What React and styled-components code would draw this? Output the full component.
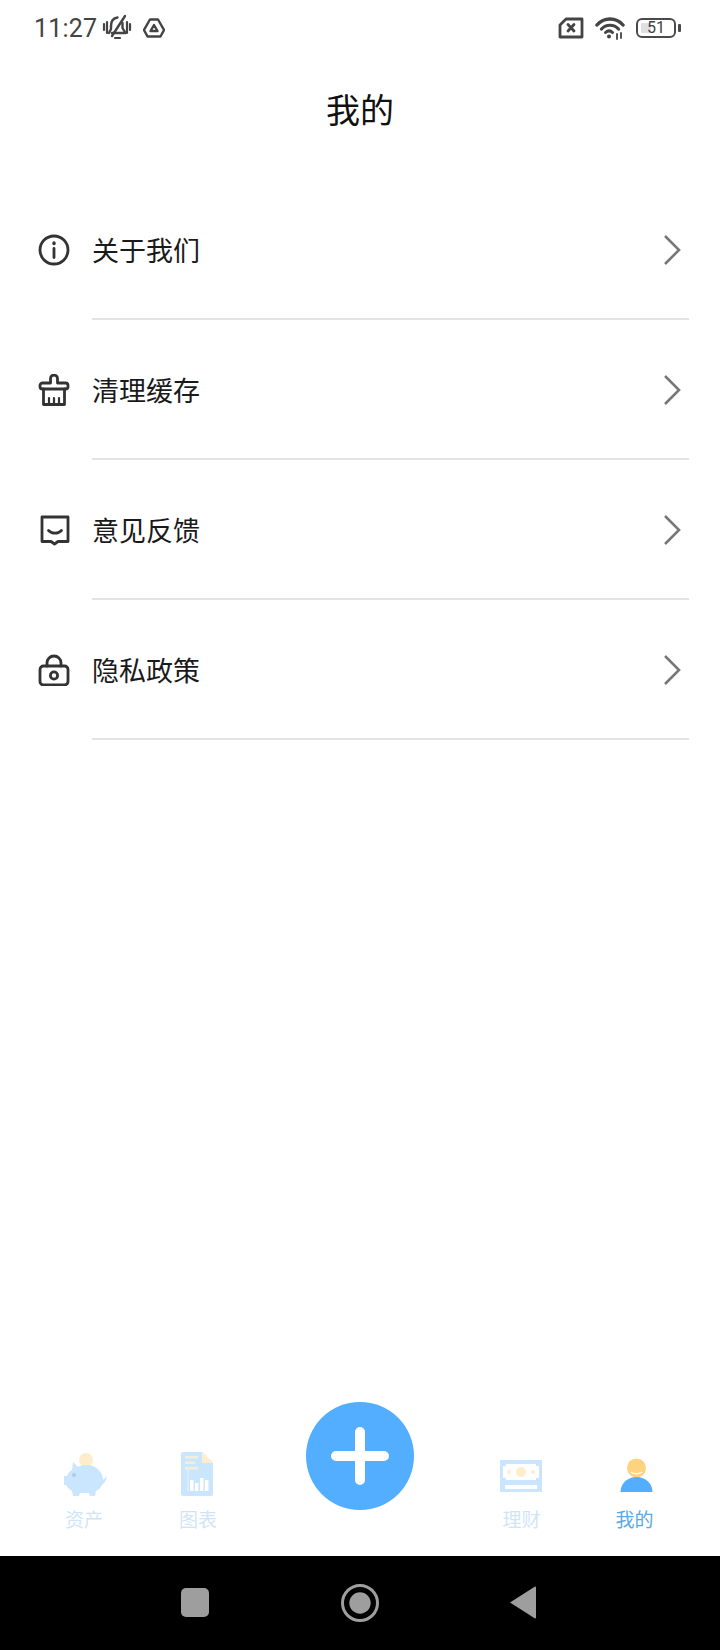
import React from "react";
import styled, { createGlobalStyle } from "styled-components";

const Global = createGlobalStyle`
  html, body { margin: 0; padding: 0; background: #fff; }
  * { box-sizing: border-box; }
`;

const CJK = `"Noto Sans CJK SC", "Noto Sans", sans-serif`;

const Page = styled.div`
  width: 720px;
  height: 1650px;
  display: flex;
  flex-direction: column;
  background: #fff;
  font-family: ${CJK};
`;

const StatusBar = styled.div`
  height: 56px;
  display: flex;
  align-items: center;
  justify-content: space-between;
  padding: 0 44px 0 34px;
`;

const StatusGroup = styled.div`
  display: flex;
  align-items: center;
  gap: ${(p) => p.$gap}px;
`;

const Clock = styled.span`
  font-family: Roboto, sans-serif;
  font-size: 25px;
  color: #444;
  letter-spacing: 0.2px;
`;

const Battery = styled.div`
  position: relative;
  width: 40px;
  height: 20px;
  border: 2px solid #4a4a4a;
  border-radius: 6px;
  display: flex;
  align-items: center;
  justify-content: center;
  font-family: Roboto, sans-serif;
  font-size: 16px;
  line-height: 1;
  color: #444;
  &::before {
    content: "";
    position: absolute;
    left: 3px;
    top: 3px;
    bottom: 3px;
    width: 10px;
    background: #dfdfdf;
    border-radius: 1px;
  }
  &::after {
    content: "";
    position: absolute;
    right: -7px;
    top: 4px;
    width: 3px;
    height: 8px;
    background: #4a4a4a;
    border-radius: 1px;
  }
`;

const BatteryLevel = styled.span`
  position: relative;
`;

const Title = styled.h1`
  margin: 0;
  height: 124px;
  padding-top: 26px;
  text-align: center;
  font-size: 34px;
  line-height: 54px;
  font-weight: 400;
  color: #111;
`;

const Menu = styled.div`
  display: flex;
  flex-direction: column;
`;

const Row = styled.div`
  height: 140px;
  display: flex;
  flex-direction: column;
  padding-left: 92px;
  padding-right: 31px;
`;

const RowBody = styled.div`
  flex: 1;
  position: relative;
  display: flex;
  align-items: center;
  justify-content: space-between;
  padding: 2px 8px 0 0;
`;

const RowIcon = styled.svg`
  position: absolute;
  left: -54px;
  top: 50%;
  margin-top: -15px;
  width: 32px;
  height: 32px;
  fill: none;
  stroke: #333;
  stroke-width: 2.8;
  stroke-linecap: round;
  stroke-linejoin: round;
`;

const RowLabel = styled.span`
  font-size: 27px;
  line-height: 40px;
  color: #1a1a1a;
`;

const Chevron = styled.svg`
  width: 18px;
  height: 32px;
  fill: none;
  stroke: #777;
  stroke-width: 2.6;
`;

const Divider = styled.div`
  height: 2px;
  background: #e3e3e3;
`;

const Spacer = styled.div`
  flex: 1;
`;

const TabBar = styled.div`
  height: 208px;
  display: grid;
  grid-template-columns: 114px 114px 210px 113px 113px;
  padding-left: 27px;
  align-items: end;
  padding-bottom: 22px;
`;

const Tab = styled.div`
  display: flex;
  flex-direction: column;
  align-items: center;
  gap: 4px;
  opacity: ${(p) => (p.$active ? 1 : 0.3)};
`;

const TabArt = styled.svg`
  display: block;
  width: 52px;
  height: 48px;
`;

const TabLabel = styled.span`
  font-size: 19px;
  line-height: 30px;
  color: ${(p) => (p.$active ? "#5aa9e6" : "#63ace8")};
`;

const FabSlot = styled.div`
  display: flex;
  justify-content: center;
  align-self: start;
  padding-top: 54px;
`;

const Fab = styled.button`
  width: 108px;
  height: 108px;
  padding: 0;
  border: 0;
  border-radius: 50%;
  background: #53aeff;
  display: flex;
  align-items: center;
  justify-content: center;
`;

const FabPlus = styled.svg`
  width: 62px;
  height: 62px;
  stroke: #fff;
  stroke-width: 10;
  stroke-linecap: round;
`;

const NavBar = styled.div`
  height: 94px;
  background: #000;
  display: flex;
  align-items: center;
  justify-content: center;
  gap: 125px;
`;

const NavIcon = styled.svg`
  width: 40px;
  height: 40px;
  fill: #9e9e9e;
`;

const StatusSvg = styled.svg`
  display: block;
  fill: none;
  stroke: #444;
  stroke-width: 2.4;
  stroke-linecap: round;
  stroke-linejoin: round;
`;

const rows = [
  {
    label: "关于我们",
    icon: (
      <>
        <circle cx="16" cy="16" r="14" />
        <path d="M16 14.5v9" />
        <path d="M16 9v.6" strokeWidth="3.4" />
      </>
    ),
  },
  {
    label: "清理缓存",
    icon: (
      <>
        <path d="M12.500 9V4.500a3.500 3.500 0 0 1 7 0V9h8a2.500 2.500 0 0 1 2.500 2.500v1a2.500 2.500 0 0 1-2.500 2.500h-23A2.500 2.500 0 0 1 2 12.500v-1A2.500 2.500 0 0 1 4.500 9z" />
        <path d="M5.500 15v15.500h21V15" />
        <path d="M11 30v-6M16 30v-6M21 30v-6" strokeWidth="2.200" />
      </>
    ),
  },
  {
    label: "意见反馈",
    icon: (
      <>
        <path d="M4 3h26v24.500h-10l-3.500 2.500-3.500-2.500H4z" />
        <path d="M10.500 16.500c3.500 3.600 9.500 3.600 13 0" />
      </>
    ),
  },
  {
    label: "隐私政策",
    icon: (
      <>
        <path d="M9 12V9a7 7 0 0 1 14 0v3" />
        <rect x="2" y="12" width="28" height="19" rx="3.500" />
        <circle cx="16" cy="21.500" r="3.600" />
      </>
    ),
  },
];

const PigArt = () => (
  <TabArt viewBox="0 0 52 48">
    <circle cx="28" cy="8" r="7" fill="#ffc25a" />
    <path
      d="M15 10L20 15C23 13 26 13 29 13C38 13 45 20 45 28C45 33 42 37 38 39L37 44H32L31 41H22L21 44H15L14 39C11 37 9 35 8 33H6V24H9C10 21 12 19 14 18Z"
      fill="#53aeff"
    />
    <path d="M44 29L49 24C48 29 46 32 43 33Z" fill="#53aeff" />
    <circle cx="16" cy="23" r="2" fill="#0b50b0" />
  </TabArt>
);

const ChartArt = () => (
  <TabArt viewBox="0 0 52 48">
    <path d="M9 2a2 2 0 0 1 2-2h19l11 11v31a2 2 0 0 1-2 2H11a2 2 0 0 1-2-2z" fill="#53aeff" />
    <path d="M30 0l11 11H30z" fill="#ffc25a" />
    <path d="M13 4h13v2.500H13zM13 9.500h10V12H13zM13 15h13v2.500H13z" fill="#d8c98a" />
    <path d="M15.500 18h1v21h-1z" fill="#a8d6ff" />
    <path d="M18 28h3.500v11H18zM23 31h3.500v8H23zM28 26h3.500v13H28zM33 28h3.500v11H33z" fill="#fff" />
  </TabArt>
);

const MoneyArt = () => (
  <TabArt viewBox="0 0 52 48">
    <rect x="4" y="8" width="42" height="32" fill="#53aeff" />
    <path d="M10 12h30v2h3v12h-3v2H10v-2H7V14h3z" fill="#fff" />
    <path d="M9 33h32v4H9z" fill="#fff" />
    <circle cx="25" cy="20" r="5" fill="#ffc25a" />
    <circle cx="13" cy="20" r="2" fill="#ffc25a" />
    <circle cx="37" cy="20" r="2" fill="#ffc25a" />
  </TabArt>
);

const UserArt = () => (
  <TabArt viewBox="0 0 52 48">
    <circle cx="27.500" cy="16" r="9.500" fill="#ffd27f" />
    <path d="M22 20c3 2.500 8 2.500 11 0" fill="none" stroke="#fff" strokeWidth="1.200" />
    <path d="M11.500 40c0-8.500 7-15 16-15s16 6.500 16 15z" fill="#53aeff" />
  </TabArt>
);

export default function App() {
  return (
    <Page>
      <Global />
      <StatusBar>
        <StatusGroup $gap={11}>
          <StatusGroup $gap={5}>
            <Clock>11:27</Clock>
            <StatusSvg width="30" height="28" viewBox="0 0 30 28">
              <path d="M9 12c0-5 2.500-8 6.500-8.500M20.500 9v5l3 5H10" />
              <path d="M9 12v3l-2 4" />
              <path d="M10 22L23 2" />
              <path d="M5 8v11M2 10v6M25 8v11M28 10v6" strokeWidth="2.200" />
              <path d="M13 24h5" strokeWidth="2.200" />
            </StatusSvg>
          </StatusGroup>
          <StatusSvg width="22" height="22" viewBox="0 0 22 22">
            <path d="M7 2.500h8L21 13l-3.500 6.500h-13L1 13z" />
            <path d="M11 8l3.500 6h-7z" />
          </StatusSvg>
        </StatusGroup>
        <StatusGroup $gap={11}>
          <StatusSvg width="26" height="22" viewBox="0 0 26 22">
            <path d="M8 2h16v18H2V8z" strokeWidth="2.800" />
            <path d="M10 7.500l6 6.500M16 7.500l-6 6.500" strokeWidth="2.800" />
          </StatusSvg>
          <StatusSvg width="30" height="24" viewBox="0 0 30 24">
            <path d="M2 9C9 1 21 1 28 9" strokeWidth="3.400" />
            <path d="M6.500 13c4.500-5 12.500-5 17 0" strokeWidth="3.200" />
            <path d="M10.500 16.500c2.200-2 5-2 7 0" strokeWidth="3" />
            <circle cx="14" cy="20.500" r="2" fill="#444" stroke="none" />
            <path d="M22 18v5M26 17v5" strokeWidth="1.800" />
          </StatusSvg>
          <Battery>
            <BatteryLevel>51</BatteryLevel>
          </Battery>
        </StatusGroup>
      </StatusBar>

      <Title>我的</Title>

      <Menu>
        {rows.map((row) => (
          <Row key={row.label}>
            <RowBody>
              <RowIcon viewBox="0 0 32 32">{row.icon}</RowIcon>
              <RowLabel>{row.label}</RowLabel>
              <Chevron viewBox="0 0 18 32">
                <path d="M2 2l14 14L2 30" />
              </Chevron>
            </RowBody>
            <Divider />
          </Row>
        ))}
      </Menu>

      <Spacer />

      <TabBar>
        <Tab>
          <PigArt />
          <TabLabel>资产</TabLabel>
        </Tab>
        <Tab>
          <ChartArt />
          <TabLabel>图表</TabLabel>
        </Tab>
        <FabSlot>
          <Fab>
            <FabPlus viewBox="0 0 62 62">
              <path d="M31 7v48M7 31h48" />
            </FabPlus>
          </Fab>
        </FabSlot>
        <Tab>
          <MoneyArt />
          <TabLabel>理财</TabLabel>
        </Tab>
        <Tab $active>
          <UserArt />
          <TabLabel $active>我的</TabLabel>
        </Tab>
      </TabBar>

      <NavBar>
        <NavIcon viewBox="0 0 40 40">
          <rect x="6" y="5" width="28" height="29" rx="5" />
        </NavIcon>
        <NavIcon viewBox="0 0 40 40">
          <circle cx="20" cy="20" r="17.500" fill="none" stroke="#9e9e9e" strokeWidth="3" />
          <circle cx="20" cy="20" r="10.700" />
        </NavIcon>
        <NavIcon viewBox="0 0 40 40">
          <path d="M5 19.500L30 3.500a1 1 0 0 1 1 1v30a1 1 0 0 1-1 1z" />
        </NavIcon>
      </NavBar>
    </Page>
  );
}
